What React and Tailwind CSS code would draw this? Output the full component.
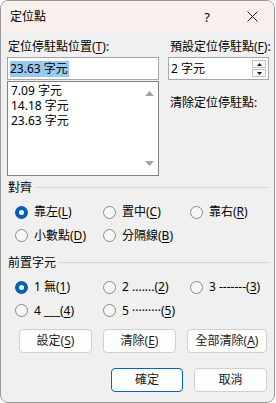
import React from "react";

function U({ children }) {
  return <span className="underline underline-offset-[2px] decoration-[1px]">{children}</span>;
}

function Radio({ checked, children }) {
  return (
    <div className="flex items-center gap-[6px] whitespace-nowrap">
      {checked ? (
        <span className="w-[13px] h-[13px] rounded-full bg-[#005fb8] flex items-center justify-center shrink-0">
          <span className="w-[5px] h-[5px] rounded-full bg-white" />
        </span>
      ) : (
        <span className="w-[13px] h-[13px] rounded-full border border-[#8a8a8a] bg-[#f6f6f6] shrink-0" />
      )}
      <span>{children}</span>
    </div>
  );
}

function Btn({ w, primary, children }) {
  return (
    <div
      className={
        "h-[24px] rounded-[4px] border flex items-center justify-center bg-[#fdfdfd] text-[#1a1a1a] " +
        (primary ? "border-[#0067c0]" : "border-[#d0d0d0]") +
        " " +
        w
      }
    >
      {children}
    </div>
  );
}

function Group({ label, lineMl }) {
  return (
    <div className="flex items-start ml-[1px] pr-[5px]">
      <span className="h-[16px]">{label}</span>
      <div className={"flex-1 h-px bg-[#d6d6d6] mt-[7px] " + lineMl} />
    </div>
  );
}

export default function App() {
  return (
    <div className="w-[276px] h-[403px] bg-white font-['Noto_Sans','Noto_Sans_CJK_TC',sans-serif] text-[12px] leading-[16px] text-black">
      <div className="w-[275px] h-[403px] border border-[#9a9a9a] rounded-[8px] overflow-hidden bg-[#f0f0f0] flex flex-col">
        {/* title bar */}
        <div className="h-[31px] shrink-0 bg-[#f7f0ec] flex items-center pl-[9px] pr-[12px]">
          <span className="text-[12px]">定位點</span>
          <span className="ml-auto w-[20px] text-center text-[13px]">?</span>
          <span className="ml-[25px] w-[20px] flex items-center justify-center">
            <svg width="11" height="11" viewBox="0 0 11 11">
              <path d="M0.5 0.5 L10.5 10.5 M10.5 0.5 L0.5 10.5" stroke="#1a1a1a" strokeWidth="1" fill="none" />
            </svg>
          </span>
        </div>

        {/* body */}
        <div className="pl-[6px] pt-[7px] flex flex-col">
          <div className="flex gap-[9px]">
            {/* left column */}
            <div className="w-[152px] flex flex-col">
              <div className="h-[16px] pl-[1px] whitespace-nowrap">
                定位停駐點位置(<U>T</U>):
              </div>
              <div className="mt-[2px] h-[23px] border border-[#a6a6a6] bg-white flex items-center pl-[2px]">
                <span className="bg-[#99c9ef] leading-[16px] pr-[1px]">23.63 字元</span>
              </div>
              <div className="mt-[1px] h-[95px] border border-[#828282] bg-white flex">
                <div className="flex-1 pl-[3px] pt-[1px] flex flex-col">
                  <div className="h-[15px] leading-[15px]">7.09 字元</div>
                  <div className="h-[15px] leading-[15px]">14.18 字元</div>
                  <div className="h-[15px] leading-[15px]">23.63 字元</div>
                </div>
                <div className="w-[17px] flex flex-col items-center justify-between py-[9px]">
                  <svg width="9" height="5" viewBox="0 0 9 5">
                    <path d="M0 5 L4.5 0 L9 5 Z" fill="#a3a3a3" />
                  </svg>
                  <svg width="9" height="5" viewBox="0 0 9 5">
                    <path d="M0 0 L4.5 5 L9 0 Z" fill="#a3a3a3" />
                  </svg>
                </div>
              </div>
            </div>

            {/* right column */}
            <div className="w-[101px] flex flex-col">
              <div className="h-[16px] pl-[2px] whitespace-nowrap">
                預設定位停駐點(<U>F</U>):
              </div>
              <div className="mt-[2px] h-[23px] border border-[#a6a6a6] bg-white flex items-center pl-[2px] pr-[2px]">
                <span>2 字元</span>
                <div className="ml-auto flex flex-col gap-[1px]">
                  <div className="w-[14px] h-[8px] border border-[#c4c4c4] bg-[#fafafa] flex items-center justify-center">
                    <svg width="5" height="3" viewBox="0 0 5 3">
                      <path d="M0 3 L2.5 0 L5 3 Z" fill="#111" />
                    </svg>
                  </div>
                  <div className="w-[14px] h-[8px] border border-[#c4c4c4] bg-[#fafafa] flex items-center justify-center">
                    <svg width="5" height="3" viewBox="0 0 5 3">
                      <path d="M0 0 L2.5 3 L5 0 Z" fill="#111" />
                    </svg>
                  </div>
                </div>
              </div>
              <div className="mt-[15px] pl-[2px] whitespace-nowrap">清除定位停駐點:</div>
            </div>
          </div>

          {/* 對齊 */}
          <div className="mt-[4px]">
            <Group label="對齊" lineMl="ml-[4px]" />
          </div>
          <div className="mt-[4px] pl-[8px] grid grid-cols-[88px_87px_1fr]">
            <div className="h-[24px] flex items-center">
              <Radio checked>靠左(<U>L</U>)</Radio>
            </div>
            <div className="h-[24px] flex items-center">
              <Radio>置中(<U>C</U>)</Radio>
            </div>
            <div className="h-[24px] flex items-center">
              <Radio>靠右(<U>R</U>)</Radio>
            </div>
            <div className="h-[23px] flex items-center">
              <Radio>小數點(<U>D</U>)</Radio>
            </div>
            <div className="h-[23px] flex items-center">
              <Radio>分隔線(<U>B</U>)</Radio>
            </div>
          </div>

          {/* 前置字元 */}
          <div className="mt-[8px]">
            <Group label="前置字元" lineMl="ml-[2px]" />
          </div>
          <div className="mt-[4px] pl-[8px] grid grid-cols-[88px_87px_1fr]">
            <div className="h-[24px] flex items-center">
              <Radio checked>1 無(<U>1</U>)</Radio>
            </div>
            <div className="h-[24px] flex items-center">
              <Radio>2 .......(<U>2</U>)</Radio>
            </div>
            <div className="h-[24px] flex items-center">
              <Radio>3 -------(<U>3</U>)</Radio>
            </div>
            <div className="h-[23px] flex items-center">
              <Radio>4 ___(<U>4</U>)</Radio>
            </div>
            <div className="h-[23px] flex items-center">
              <Radio>5 ·········(<U>5</U>)</Radio>
            </div>
          </div>

          {/* buttons */}
          <div className="mt-[7px] pl-[12px] flex gap-[11px]">
            <Btn w="w-[73px]">設定(<U>S</U>)</Btn>
            <Btn w="w-[73px]">清除(<U>E</U>)</Btn>
            <Btn w="w-[80px]">全部清除(<U>A</U>)</Btn>
          </div>
          <div className="mt-[15px] pl-[104px] flex gap-[11px]">
            <Btn w="w-[72px]" primary>確定</Btn>
            <Btn w="w-[73px]">取消</Btn>
          </div>
        </div>
      </div>
    </div>
  );
}
